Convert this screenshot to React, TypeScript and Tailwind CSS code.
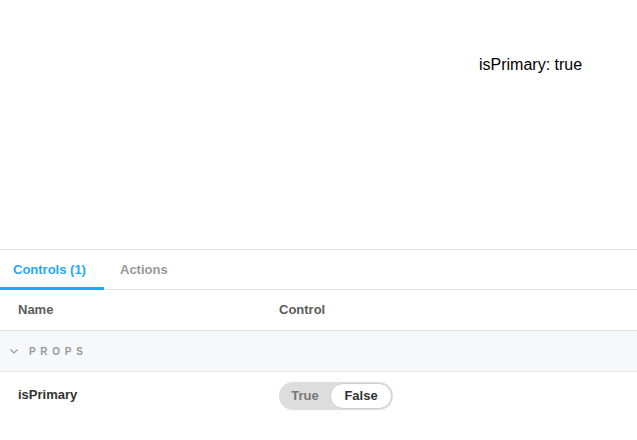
import React from "react";

export default function App() {
  return (
    <div className="w-[637px] h-[440px] bg-white overflow-hidden flex flex-col" style={{ fontFamily: '"Liberation Sans", Arial, sans-serif' }}>
      <div className="h-[250px] shrink-0 border-b border-[#e5e5e5] flex">
        <div className="pl-[479px] pt-[55px] text-[16px] text-black leading-[20px]">isPrimary: true</div>
      </div>
      <div className="h-[40px] shrink-0 flex border-b border-[#e5e5e5] relative">
        <div className="relative w-[104px] flex items-center pl-[13px] text-[13px] font-bold text-[#1ea7fd]">
          Controls (1)
          <div className="absolute left-0 right-0 bottom-[-1px] h-[3px] bg-[#1ea7fd]" />
        </div>
        <div className="flex items-center pl-[16px] text-[13px] font-bold text-[#999999]">Actions</div>
      </div>
      <div className="h-[41px] shrink-0 flex items-center border-b border-[#e5e5e5] text-[13px] font-bold text-[#5c5c5c]">
        <div className="w-[279px] pl-[18px]">Name</div>
        <div>Control</div>
      </div>
      <div className="h-[41px] shrink-0 flex items-center border-b border-[#e5e5e5] bg-[#f6f9fc] pl-[9px]">
        <svg width="10" height="7" viewBox="0 0 10 7" className="mr-[10px]">
          <path d="M1.5 1.5 L5 5 L8.5 1.5" fill="none" stroke="#999" strokeWidth="1.1" />
        </svg>
        <span className="text-[10px] font-bold tracking-[0.47em] text-[#999999]">PROPS</span>
      </div>
      <div className="flex pt-[10px]">
        <div className="w-[279px] pl-[18px] text-[13px] font-bold text-[#333333] pt-[3px]">isPrimary</div>
        <div className="h-[28px] w-[114px] rounded-full bg-[#dddddd] flex items-center p-[1px] text-[13px] font-bold">
          <div className="w-[50px] text-center text-[#777777]">True</div>
          <div className="flex-1 h-[26px] rounded-full bg-white border border-[#d0d0d0] flex items-center justify-center text-[#333333]">False</div>
        </div>
      </div>
    </div>
  );
}
